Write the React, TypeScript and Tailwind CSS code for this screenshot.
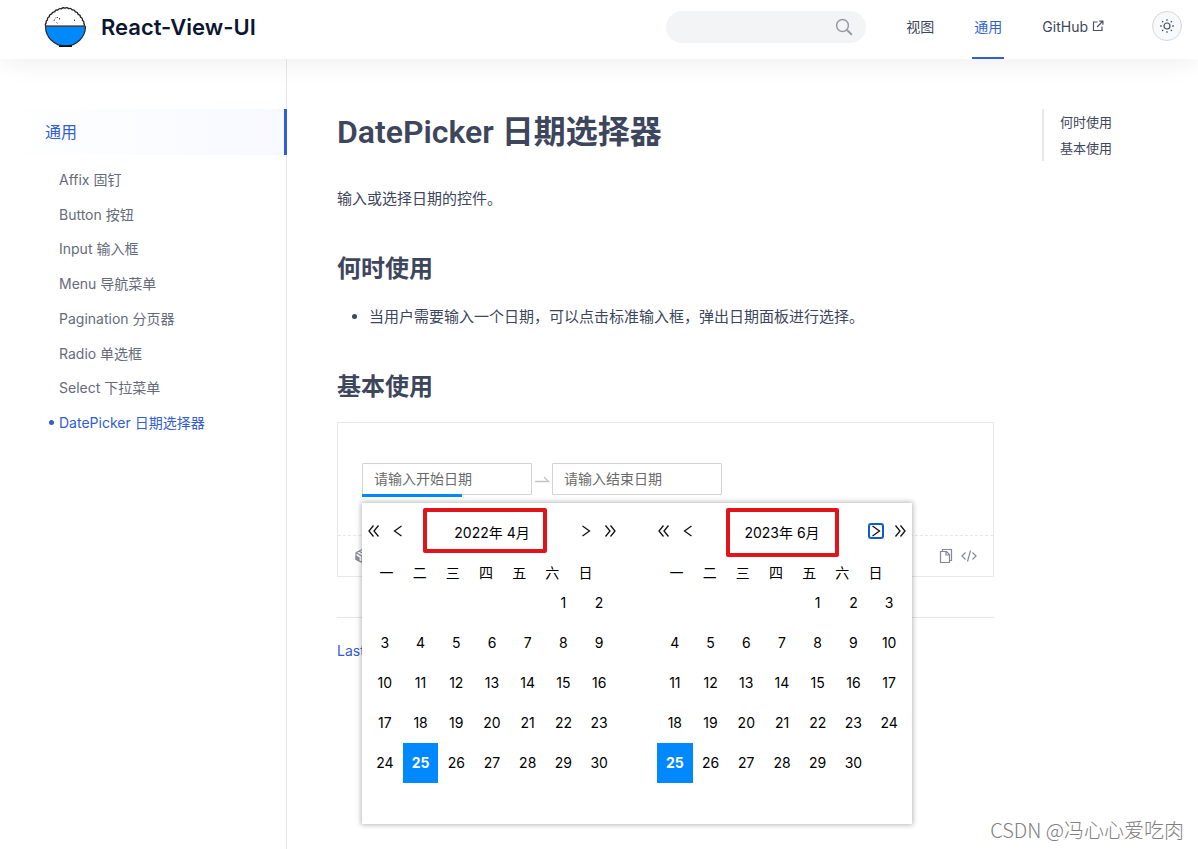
import { useState } from 'react';

type MenuItem = { label: string; active?: boolean };

const MENU: MenuItem[] = [
  { label: 'Affix 固钉' },
  { label: 'Button 按钮' },
  { label: 'Input 输入框' },
  { label: 'Menu 导航菜单' },
  { label: 'Pagination 分页器' },
  { label: 'Radio 单选框' },
  { label: 'Select 下拉菜单' },
  { label: 'DatePicker 日期选择器', active: true },
];

const TOC = ['何时使用', '基本使用'];
const WEEKDAYS = ['一', '二', '三', '四', '五', '六', '日'];

/* ---------- Icons ---------- */
function Logo() {
  return (
    <svg width="42" height="42" viewBox="0 0 42 42" aria-hidden="true">
      <path
        d="M2 20.500 Q.6 18.500 2.200 17 Q1.500 15 3.500 14 Q3 11.500 5.200 10.900 Q5.200 8.400 7.600 8.200 Q8.200 5.700 10.600 5.900 Q11.500 3.500 13.700 4.100 Q15.200 1.900 17.200 2.900 Q19 1 20.900 2.200 Q23 .9 24.600 2.700 Q26.900 1.800 28.100 3.900 Q30.600 3.500 31.300 5.800 Q33.700 5.900 34.100 8.300 Q36.600 8.700 36.500 11.200 Q38.900 12 38.500 14.400 Q40.500 15.500 39.800 17.500 Q41 19 40 20.500 Z"
        fill="#fff"
        stroke="#222"
        strokeWidth="1.3"
      />
      <path d="M1.500 20.500 H41.500 A20 19.500 0 0 1 1.500 20.500 Z" fill="#0088ff" stroke="#2b2b2b" strokeWidth="1.2" />
      <path d="M1.500 20.300 H41.500" stroke="#444" strokeWidth="1.600" />
      <path d="M15 39.300 H28 V41 H15 Z" fill="#111" />
      <path
        d="M13 11 l1 1 M10.500 13.500 l-.5 1.500 M15.500 12 v1.500 M12.500 16.500 l1 .8 M11.500 12 l.8 -.4 M30.500 13.500 v1.500"
        stroke="#444"
        strokeWidth="1"
      />
    </svg>
  );
}

function SearchIcon() {
  return (
    <svg width="18" height="18" viewBox="0 0 18 18" fill="none" stroke="#979ba6" aria-hidden="true">
      <circle cx="7.500" cy="7.500" r="5.900" strokeWidth="1.500" />
      <path d="M12 12 L16.300 16.300" strokeWidth="2" strokeLinecap="round" />
    </svg>
  );
}

function ExternalIcon() {
  return (
    <svg width="12" height="12" viewBox="0 0 12 12" fill="none" stroke="#4b5266" strokeWidth="1.200" aria-hidden="true">
      <path d="M5.500 2 H1.500 V10.500 H10 V6.500" />
      <path d="M5 7 L10.500 1.500 M7.300 1.200 H10.900 V4.800" />
    </svg>
  );
}

function SunIcon() {
  return (
    <svg width="14" height="14" viewBox="0 0 14 14" fill="none" stroke="#474f63" strokeLinecap="round" aria-hidden="true">
      <circle cx="7" cy="7" r="3" strokeWidth="1.200" />
      <path
        d="M7 .7 V1.300 M7 12.700 V13.300 M.7 7 H1.300 M12.700 7 H13.300 M2.500 2.500 L2.900 2.900 M11.100 11.100 L11.500 11.500 M2.500 11.500 L2.900 11.100 M11.100 2.900 L11.500 2.500"
        strokeWidth="1.300"
      />
    </svg>
  );
}

function ChevronIcon({ double = false, right = false }: { double?: boolean; right?: boolean }) {
  const left = double ? 'M7.500 2.500 L3 8 L7.500 13.500 M12.500 2.500 L8 8 L12.500 13.500' : 'M11.500 3 L4.500 8 L11.500 13';
  const toRight = double ? 'M3.500 2.500 L8 8 L3.500 13.500 M8.500 2.500 L13 8 L8.500 13.500' : 'M4.500 3 L11.500 8 L4.500 13';
  return (
    <svg width="16" height="16" viewBox="0 0 16 16" fill="none" stroke="#111" strokeWidth="1.300" aria-hidden="true">
      <path d={right ? toRight : left} />
    </svg>
  );
}

function SwapIcon() {
  return (
    <svg width="16" height="8" viewBox="0 0 16 8" fill="none" stroke="#c4c4c4" strokeWidth="1.300" aria-hidden="true">
      <path d="M1 6.500 H14.500 L10 2" />
    </svg>
  );
}

function BoxIcon() {
  return (
    <svg width="16" height="16" viewBox="0 0 16 16" fill="none" stroke="#8a8e9c" strokeWidth="1.100" aria-hidden="true">
      <path d="M8 1.500 L14 4.700 V11.300 L8 14.500 L2 11.300 V4.700 Z M2 4.700 L8 8 L14 4.700 M8 8 V14.500 M5 3.200 L8 4.700 L11 3.200" />
      <path d="M2 8 L5 9.700 V13 L2 11.300 Z" fill="#8a8e9c" />
    </svg>
  );
}

function CopyIcon() {
  return (
    <svg width="14" height="16" viewBox="0 0 14 16" fill="none" stroke="#858997" strokeWidth="1.200" aria-hidden="true">
      <path d="M3.500 3 V1.500 H12.500 V12.500 H10.500" />
      <path d="M1.500 3.500 H7.500 L10.500 6.500 V14.500 H1.500 Z M7 3.500 V7 H10.500" />
    </svg>
  );
}

function CodeIcon() {
  return (
    <svg width="16" height="14" viewBox="0 0 16 14" fill="none" stroke="#858997" strokeWidth="1.200" aria-hidden="true">
      <path d="M4.500 3.500 L1 7 L4.500 10.500 M11.500 3.500 L15 7 L11.500 10.500 M9.500 1.500 L6.500 12.500" />
    </svg>
  );
}

/* ---------- Calendar ---------- */
type MonthPanelProps = {
  title: string;
  // empty cells before the first day
  offset: number;
  days: number;
  selected: number;
  nextFocused?: boolean;
  markClass: string;
};

function MonthPanel({ title, offset, days, selected, nextFocused = false, markClass }: MonthPanelProps) {
  const [current, setCurrent] = useState(selected);

  return (
    <section className="w-[260px]" aria-label={title}>
      <div className="relative flex h-14 items-center gap-2 px-1">
        <button type="button" aria-label="上一年"><ChevronIcon double /></button>
        <button type="button" aria-label="上个月"><ChevronIcon /></button>
        <span className="flex-1 pt-1 text-center text-[14px] leading-5">{title}</span>
        <button
          type="button"
          aria-label="下个月"
          className={nextFocused ? 'rounded-[3px] outline-2 -outline-offset-2 outline-[#0a5fcb]' : ''}
        >
          <ChevronIcon right />
        </button>
        <button type="button" aria-label="下一年"><ChevronIcon double right /></button>
        <div className={`pointer-events-none absolute rounded-[2px] border-4 border-[#e1141b] ${markClass}`} />
      </div>

      <div className="mx-2 flex h-6 w-[232px] items-end text-center text-[14px] leading-5">
        {WEEKDAYS.map((d) => (
          <span key={d} className="flex-1">{d}</span>
        ))}
      </div>

      <div className="mx-[5px] grid grid-cols-7 text-[14px]">
        {Array.from({ length: offset }, (_, i) => (
          <span key={`e-${i}`} />
        ))}
        {Array.from({ length: days }, (_, i) => i + 1).map((day) => (
          <button
            key={day}
            type="button"
            onClick={() => setCurrent(day)}
            className={`h-10 pb-[2px] ${day === current ? 'bg-[#0088ff] font-bold text-white' : ''}`}
          >
            {day}
          </button>
        ))}
      </div>
    </section>
  );
}

/* ---------- Layout ---------- */
function Header() {
  return (
    <header className="relative z-20 flex h-[59px] items-start bg-white pr-4 pl-11 shadow-[0_8px_24px_-2px_rgba(0,0,0,0.06)]">
      <a href="#home" className="mt-[6px] flex items-center gap-[15px] text-[22px] leading-[42px] font-semibold text-[#0b1630]">
        <Logo />
        React-View-UI
      </a>
      <label className="mt-[11px] ml-auto flex h-8 w-[200px] items-center rounded-full bg-[#f3f4f6] pr-[13px] pl-4">
        <input type="search" aria-label="搜索" className="min-w-0 flex-1 bg-transparent text-sm outline-none" />
        <SearchIcon />
      </label>
      <nav className="ml-[38px] flex gap-9 text-[14px] leading-[54px] text-[#3d465c]">
        <a href="#view" className="h-[59px] px-[2px]">视图</a>
        <a href="#general" className="h-[59px] border-b-2 border-[#315ed0] px-[2px] text-[#315ed0]">通用</a>
        <a href="#github" className="flex h-[59px] items-start gap-1 pl-[2px]">
          GitHub
          <span className="mt-5"><ExternalIcon /></span>
        </a>
      </nav>
      <button
        type="button"
        aria-label="切换主题"
        className="mt-[11px] ml-12 flex size-[30px] items-center justify-center rounded-full border border-[#d5d7dc] bg-[#f8f9fb]"
      >
        <SunIcon />
      </button>
    </header>
  );
}

function Sidebar() {
  return (
    <aside className="w-[287px] shrink-0 border-r border-[#e6e7ee] pt-[50px]">
      <a
        href="#general"
        className="-mr-px block border-r-[3px] border-[#315ed0] bg-linear-to-r from-white to-[#f6f9ff] pl-[45px] text-base leading-[46px] text-[#315ed0]"
      >
        通用
      </a>
      <ul className="mt-[7px] grid min-h-[278px] auto-rows-fr text-[14px] text-[#666b7b]">
        {MENU.map((item) => (
          <li key={item.label} className="flex items-center pl-[49px]">
            <span className={`mr-[5px] size-[5px] rounded-full ${item.active ? 'bg-[#315ed0]' : ''}`} />
            <a href={`#${item.label.split(' ')[0]}`} className={item.active ? 'text-[#315ed0]' : ''}>
              {item.label}
            </a>
          </li>
        ))}
      </ul>
    </aside>
  );
}

function Demo() {
  return (
    <div className="mt-[19px] border border-[#e8e9ef]">
      <div className="relative flex items-center px-6 py-10">
        <div className="relative">
          <input
            aria-label="开始日期"
            placeholder="请输入开始日期"
            className="block h-8 w-[170px] rounded-[1px] border border-[#d3d3d3] px-[11px] pb-[2px] text-[14px] outline-none placeholder:text-[#6b6b6b]"
          />
          <div className="absolute -bottom-[2px] left-0 h-[3px] w-[100px] bg-[#0088ff]" />
        </div>
        <div className="flex w-5 justify-center"><SwapIcon /></div>
        <input
          aria-label="结束日期"
          placeholder="请输入结束日期"
          className="block h-8 w-[170px] rounded-[1px] border border-[#d3d3d3] px-[11px] pb-[2px] text-[14px] outline-none placeholder:text-[#6b6b6b]"
        />

        {/* Date range popup */}
        <div className="absolute top-20 left-6 z-10 flex w-[550px] justify-between bg-white pb-[41px] text-black shadow-[0_0_5px_1px_rgba(0,0,0,0.28)]">
          <MonthPanel title="2022年 4月" offset={5} days={30} selected={25} markClass="top-[5px] left-[61px] h-[45px] w-[124px]" />
          <MonthPanel title="2023年 6月" offset={4} days={30} selected={25} nextFocused markClass="top-[5px] left-[74px] h-[49px] w-[113px]" />
        </div>
      </div>
      <div className="flex h-[41px] items-center gap-2 border-t border-dashed border-[#e6e7ee] px-4">
        <button type="button" aria-label="CodeSandbox"><BoxIcon /></button>
        <button type="button" aria-label="复制" className="ml-auto"><CopyIcon /></button>
        <button type="button" aria-label="查看源码"><CodeIcon /></button>
      </div>
    </div>
  );
}

function App() {
  return (
    <div className="relative flex min-h-screen flex-col bg-white font-['Inter','Noto_Sans_CJK_SC',sans-serif]">
      <Header />
      <div className="flex flex-1">
        <Sidebar />
        <main className="min-w-0 flex-1 pt-12 pl-[50px] text-[#3d465c]">
          <h1 className="font-['Roboto','Noto_Sans_CJK_SC',sans-serif] text-[32px] leading-[50px] font-semibold">
            DatePicker 日期选择器
          </h1>
          <p className="mt-[30px] text-[15px] leading-6">输入或选择日期的控件。</p>
          <h2 className="mt-[42px] text-2xl leading-8 font-semibold">何时使用</h2>
          <ul className="mt-5 list-disc pl-8 text-[15px] leading-6">
            <li>当用户需要输入一个日期，可以点击标准输入框，弹出日期面板进行选择。</li>
          </ul>
          <h2 className="mt-[42px] text-2xl leading-8 font-semibold">基本使用</h2>
          <Demo />
          <div className="mt-10 border-t border-[#e6e7ee] pt-[23px] text-[14px] leading-5">
            <a href="#last" className="text-[#315ed0]">Last</a>
          </div>
        </main>
        <aside className="w-[204px] shrink-0 pt-[50px] pl-12">
          <ul className="border-l-2 border-[#e6e7ee] pl-4 text-[13px] leading-[26px] text-[#3d465c]">
            {TOC.map((item) => (
              <li key={item}><a href={`#${item}`}>{item}</a></li>
            ))}
          </ul>
        </aside>
      </div>
      <div className="absolute right-[14px] bottom-1 font-['Noto_Sans_CJK_SC',sans-serif] text-[20px] leading-[30px] font-light text-[#808080]">
        CSDN @冯心心爱吃肉
      </div>
    </div>
  );
}

export default App;
